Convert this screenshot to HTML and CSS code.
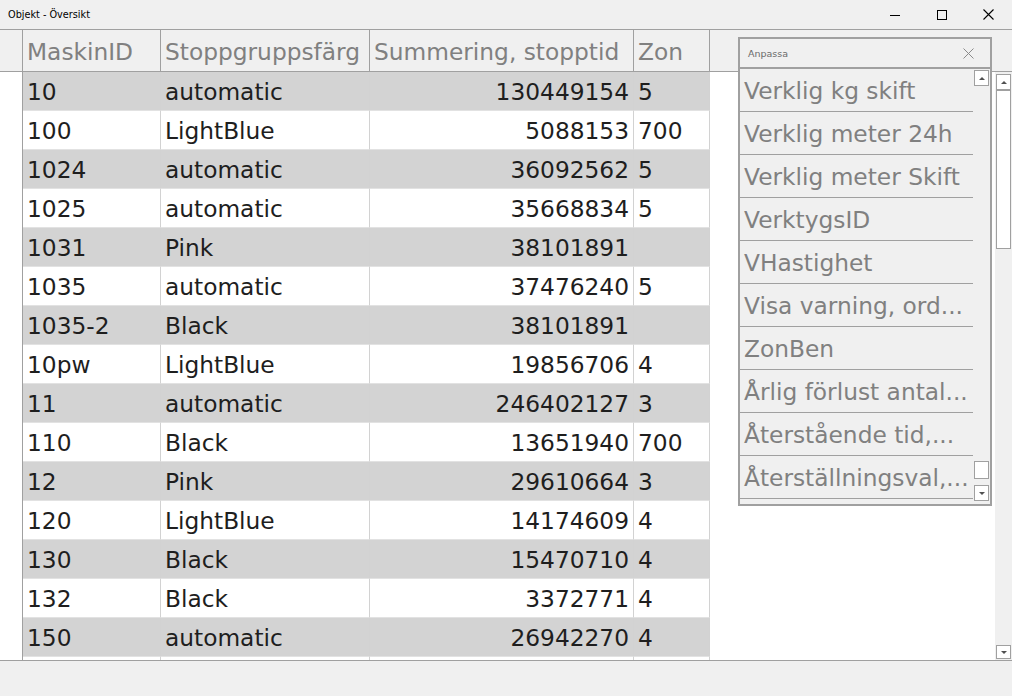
FILE: index.html
```html
<!DOCTYPE html>
<html lang="sv">
<head>
  <meta charset="UTF-8" />
  <title>Objekt - Översikt</title>
  <link rel="stylesheet" href="styles.css">
</head>
<body>
  <div class="window">
    <!-- Titelrad -->
    <div class="titlebar">
      <span class="title">Objekt - Översikt</span>
      <div class="controls">
        <span class="ctl"><svg width="10" height="10" viewBox="0 0 10 10"><path d="M0 5.5H10" stroke="#000" stroke-width="1"/></svg></span>
        <span class="ctl"><svg width="10" height="10" viewBox="0 0 10 10"><rect x="0.5" y="0.5" width="9" height="9" fill="none" stroke="#000" stroke-width="1"/></svg></span>
        <span class="ctl"><svg width="11" height="11" viewBox="0 0 11 11"><path d="M0.5 0.5L10.5 10.5M10.5 0.5L0.5 10.5" stroke="#000" stroke-width="1.1"/></svg></span>
      </div>
    </div>

    <!-- Tabell -->
    <div class="grid">
      <div class="grid-head">
        <div class="hcell gut"></div>
        <div class="hcell">MaskinID</div>
        <div class="hcell">Stoppgruppsfärg</div>
        <div class="hcell">Summering, stopptid</div>
        <div class="hcell">Zon</div>
        <div class="hcell fill"></div>
      </div>
      <div class="grid-body">
        <div class="rows">
          <div class="row alt"><div class="gut"></div><div class="cell">10</div><div class="cell">automatic</div><div class="cell num">130449154</div><div class="cell">5</div><div class="fill"></div></div>
          <div class="row"><div class="gut"></div><div class="cell">100</div><div class="cell">LightBlue</div><div class="cell num">5088153</div><div class="cell">700</div><div class="fill"></div></div>
          <div class="row alt"><div class="gut"></div><div class="cell">1024</div><div class="cell">automatic</div><div class="cell num">36092562</div><div class="cell">5</div><div class="fill"></div></div>
          <div class="row"><div class="gut"></div><div class="cell">1025</div><div class="cell">automatic</div><div class="cell num">35668834</div><div class="cell">5</div><div class="fill"></div></div>
          <div class="row alt"><div class="gut"></div><div class="cell">1031</div><div class="cell">Pink</div><div class="cell num">38101891</div><div class="cell"></div><div class="fill"></div></div>
          <div class="row"><div class="gut"></div><div class="cell">1035</div><div class="cell">automatic</div><div class="cell num">37476240</div><div class="cell">5</div><div class="fill"></div></div>
          <div class="row alt"><div class="gut"></div><div class="cell">1035-2</div><div class="cell">Black</div><div class="cell num">38101891</div><div class="cell"></div><div class="fill"></div></div>
          <div class="row"><div class="gut"></div><div class="cell">10pw</div><div class="cell">LightBlue</div><div class="cell num">19856706</div><div class="cell">4</div><div class="fill"></div></div>
          <div class="row alt"><div class="gut"></div><div class="cell">11</div><div class="cell">automatic</div><div class="cell num">246402127</div><div class="cell">3</div><div class="fill"></div></div>
          <div class="row"><div class="gut"></div><div class="cell">110</div><div class="cell">Black</div><div class="cell num">13651940</div><div class="cell">700</div><div class="fill"></div></div>
          <div class="row alt"><div class="gut"></div><div class="cell">12</div><div class="cell">Pink</div><div class="cell num">29610664</div><div class="cell">3</div><div class="fill"></div></div>
          <div class="row"><div class="gut"></div><div class="cell">120</div><div class="cell">LightBlue</div><div class="cell num">14174609</div><div class="cell">4</div><div class="fill"></div></div>
          <div class="row alt"><div class="gut"></div><div class="cell">130</div><div class="cell">Black</div><div class="cell num">15470710</div><div class="cell">4</div><div class="fill"></div></div>
          <div class="row"><div class="gut"></div><div class="cell">132</div><div class="cell">Black</div><div class="cell num">3372771</div><div class="cell">4</div><div class="fill"></div></div>
          <div class="row alt"><div class="gut"></div><div class="cell">150</div><div class="cell">automatic</div><div class="cell num">26942270</div><div class="cell">4</div><div class="fill"></div></div>
          <!-- nästa rad syns bara som en smal remsa -->
          <div class="row"><div class="gut"></div><div class="cell"></div><div class="cell"></div><div class="cell num"></div><div class="cell"></div><div class="fill"></div></div>
        </div>
        <div class="vscroll">
          <div class="sbtn"><span class="tri-up"></span></div>
          <div class="thumb"></div>
          <div class="track"></div>
          <div class="sbtn short"><span class="tri-down"></span></div>
        </div>
      </div>

      <!-- Flytande panel "Anpassa" -->
      <div class="panel">
        <div class="panel-head">
          <span>Anpassa</span>
          <svg width="11" height="11" viewBox="0 0 11 11"><path d="M0.5 0.5L10.5 10.5M10.5 0.5L0.5 10.5" stroke="#8a8a8a" stroke-width="1"/></svg>
        </div>
        <div class="panel-body">
          <div class="plist">
            <div class="pitem">Verklig kg skift</div>
            <div class="pitem">Verklig meter 24h</div>
            <div class="pitem">Verklig meter Skift</div>
            <div class="pitem">VerktygsID</div>
            <div class="pitem">VHastighet</div>
            <div class="pitem">Visa varning, ord...</div>
            <div class="pitem">ZonBen</div>
            <div class="pitem">Årlig förlust antal...</div>
            <div class="pitem">Återstående tid,...</div>
            <div class="pitem">Återställningsval,...</div>
          </div>
          <div class="pscroll">
            <div class="sbtn"><span class="tri-up"></span></div>
            <div class="track"></div>
            <div class="pthumb"></div>
            <div class="sbtn"><span class="tri-down"></span></div>
          </div>
        </div>
      </div>
    </div>

    <div class="statusbar"></div>
  </div>
</body>
</html>
```

FILE: styles.css
```css
/* ===== Allmänt ===== */
body {
  margin: 0;
  background-color: #f0f0f0;
  font-family: "DejaVu Sans", Verdana, sans-serif;
  color: #1e1e1e;
}
.window {
  position: relative;
  width: 1012px;
  height: 696px;
  display: flex;
  flex-direction: column;
  overflow: hidden;
}

/* ===== Titelrad ===== */
.titlebar {
  height: 30px;
  box-sizing: border-box;
  border-bottom: 1px solid #a0a0a0;
  display: flex;
  align-items: center;
  justify-content: space-between;
  padding-left: 8px;
}
.title {
  font-size: 9.7px;
  color: #000;
}
.controls {
  display: flex;
  height: 100%;
}
.ctl {
  width: 47px;
  display: flex;
  align-items: center;
  justify-content: center;
}
.ctl svg {
  display: block;
}

/* ===== Tabell ===== */
.grid {
  display: flex;
  flex-direction: column;
  font-size: 23.3px;
}
.grid-head,
.row {
  display: grid;
  grid-template-columns: 23px 138px 209px 264px 76px 1fr;
}
.grid-head {
  height: 42px;
  background-color: #f0f0f0;
}
.hcell {
  box-sizing: border-box;
  border-right: 1px solid #a0a0a0;
  border-bottom: 1px solid #a0a0a0;
  padding: 4px 0 0 4px;
  line-height: 36px;
  color: #808080;
  white-space: nowrap;
  overflow: hidden;
}
.hcell.fill {
  border-right: none;
}
.grid-body {
  height: 588px;
  display: flex;
}
.rows {
  flex: 1;
  overflow: hidden;
  background-color: #fff;
}
.row {
  height: 39px;
}
.cell {
  box-sizing: border-box;
  border-right: 1px solid #d2d2d2;
  border-bottom: 1px solid #e2e2e2;
  padding: 2px 0 0 4px;
  line-height: 36px;
  white-space: nowrap;
  overflow: hidden;
  background-color: #fff;
}
.row.alt .cell {
  background-color: #d3d3d3;
}
.cell.num {
  text-align: right;
  padding-right: 4px;
}
.gut {
  border-right: 1px solid #a0a0a0;
  background-color: #fff;
}
.fill {
  background-color: #fff;
}
.hcell.gut,
.hcell.fill {
  background-color: #f0f0f0;
}

/* ===== Rullningslister ===== */
.vscroll {
  width: 17px;
  background-color: #f0f0f0;
  display: flex;
  flex-direction: column;
  align-items: center;
  padding: 2px 0 1px;
  box-sizing: border-box;
}
.sbtn {
  width: 15px;
  height: 16px;
  box-sizing: border-box;
  border: 1px solid #a0a0a0;
  background-color: #fff;
  display: flex;
  align-items: center;
  justify-content: center;
}
.sbtn.short {
  height: 14px;
}
.tri-up {
  width: 0;
  height: 0;
  border-left: 3px solid transparent;
  border-right: 3px solid transparent;
  border-bottom: 3px solid #505050;
}
.tri-down {
  width: 0;
  height: 0;
  border-left: 3px solid transparent;
  border-right: 3px solid transparent;
  border-top: 3px solid #505050;
}
.thumb {
  width: 15px;
  height: 159px;
  box-sizing: border-box;
  border: 1px solid #a0a0a0;
  background-color: #fff;
}
.track {
  flex: 1;
}

/* ===== Panel "Anpassa" ===== */
.panel {
  position: absolute;
  left: 738px;
  top: 37px;
  width: 254px;
  height: 469px;
  box-sizing: border-box;
  border: 2px solid #a0a0a0;
  background-color: #f0f0f0;
  display: flex;
  flex-direction: column;
}
.panel-head {
  height: 30px;
  flex: none;
  box-sizing: border-box;
  border-bottom: 2px solid #a0a0a0;
  display: flex;
  align-items: center;
  justify-content: space-between;
  padding: 0 16px 0 8px;
  font-size: 9.5px;
  color: #6a6a6a;
}
.panel-body {
  flex: 1;
  display: flex;
  overflow: hidden;
}
.plist {
  width: 233px;
  overflow: hidden;
  font-size: 23.3px;
  color: #808080;
}
.pitem {
  height: 43px;
  box-sizing: border-box;
  border-bottom: 1px solid #a0a0a0;
  padding: 2px 0 0 4px;
  line-height: 40px;
  white-space: nowrap;
  overflow: hidden;
}
.pscroll {
  width: 17px;
  display: flex;
  flex-direction: column;
  align-items: center;
  padding: 1px 0 3px;
  box-sizing: border-box;
}
.pthumb {
  width: 15px;
  height: 18px;
  box-sizing: border-box;
  border: 1px solid #a0a0a0;
  background-color: #fff;
  margin-bottom: 6px;
}

/* ===== Statusrad ===== */
.statusbar {
  flex: 1;
  border-top: 1px solid #a0a0a0;
  background-color: #f0f0f0;
}
```
